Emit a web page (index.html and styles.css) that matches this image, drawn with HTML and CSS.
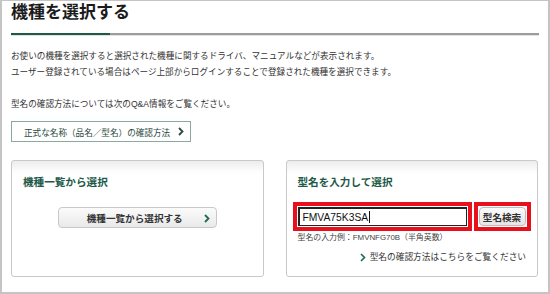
FILE: index.html
```html
<!DOCTYPE html>
<html lang="ja">
<head>
    <meta charset="UTF-8" />
    <title>機種を選択する</title>
    <link rel="stylesheet" href="styles.css">
</head>
<body>
    <div class="frame">
        <h1>機種を選択する</h1>
        <div class="rule"></div>

        <p class="lead">お使いの機種を選択すると選択された機種に関するドライバ、マニュアルなどが表示されます。<br>ユーザー登録されている場合はページ上部からログインすることで登録された機種を選択できます。</p>
        <p class="note">型名の確認方法については次のQ&amp;A情報をご覧ください。</p>

        <a class="howto" href="#">正式な名称（品名／型名）の確認方法
            <svg class="chev" width="6" height="9" viewBox="0 0 6 9"><polyline points="1,1 4.5,4.5 1,8" fill="none" stroke="#2c4a40" stroke-width="1.8"/></svg>
        </a>

        <div class="cards">
            <div class="card">
                <h2>機種一覧から選択</h2>
                <div class="list-btn-wrap">
                    <a class="list-btn" href="#">機種一覧から選択する
                        <svg class="chev-abs" width="6" height="9" viewBox="0 0 6 9"><polyline points="1,1 4.5,4.5 1,8" fill="none" stroke="#1d6a52" stroke-width="1.8"/></svg>
                    </a>
                </div>
            </div>
            <div class="card">
                <h2>型名を入力して選択</h2>
                <div class="search-row">
                    <div class="hl">
                        <div class="input-box"><span class="typed">FMVA75K3SA</span><span class="caret"></span></div>
                    </div>
                    <div class="hl">
                        <button class="search-btn">型名検索</button>
                    </div>
                </div>
                <div class="hint">型名の入力例：FMVNFG70B（半角英数）</div>
                <a class="more" href="#">
                    <svg width="6" height="9" viewBox="0 0 6 9"><polyline points="1,1 4.5,4.5 1,8" fill="none" stroke="#1d6a52" stroke-width="1.6"/></svg>
                    型名の確認方法はこちらをご覧ください
                </a>
            </div>
        </div>
    </div>
</body>
</html>
```

FILE: styles.css
```css
body {
    margin: 0;
    padding: 0;
    background: #fff;
    color: #333;
    font-family: "Liberation Sans", "Noto Sans CJK JP", sans-serif;
}
.frame {
    width: 550px;
    height: 294px;
    box-sizing: border-box;
    border: 2px solid #c4c4c4;
    border-top-width: 1px;
    padding: 0 9px 0 9px;
    overflow: hidden;
}
h1 {
    margin: 0;
    padding-top: 1px;
    font-size: 17px;
    line-height: 22px;
    height: 22px;
    color: #1b1b1b;
    font-weight: bold;
    padding-bottom: 9px;
}
.rule {
    height: 2px;
    width: 528px;
    background: linear-gradient(to right, #1d5a48 99px, #9c9c9c 99px);
    border-bottom: 1px solid #e2e2e2;
}
.lead,
.note {
    margin: 0;
    font-size: 8.6px;
    line-height: 16px;
    color: #333;
}
.lead {
    margin-top: 12px;
}
.note {
    margin-top: 16px;
}
.howto {
    margin-top: 9px;
    display: flex;
    align-items: center;
    width: 180px;
    height: 21px;
    box-sizing: border-box;
    border: 1px solid #8aaa9f;
    padding-left: 12px;
    font-size: 8.6px;
    color: #2c4a40;
    text-decoration: none;
}
.chev {
    margin-left: 8px;
}
.cards {
    margin-top: 18px;
    display: flex;
    gap: 22px;
    width: 527px;
}
.card {
    flex: 1 1 0;
    min-width: 0;
    height: 117px;
    box-sizing: border-box;
    border: 1px solid #c9c9c9;
    border-radius: 3px;
    background: linear-gradient(to bottom, #ececec 0, #fcfcfc 10px, #fff 14px);
    padding: 14px 11px 0 11px;
    display: flex;
    flex-direction: column;
}
.card h2 {
    margin: 0;
    font-size: 10.6px;
    line-height: 14px;
    color: #1d5a48;
    font-weight: bold;
}
.list-btn-wrap {
    margin-top: 18px;
    display: flex;
    justify-content: center;
}
.list-btn {
    position: relative;
    width: 159px;
    height: 21px;
    box-sizing: border-box;
    border: 1px solid #c8c8c8;
    border-radius: 4px;
    background: linear-gradient(to bottom, #fbfbfb, #e9e9e9);
    font-size: 9.6px;
    font-weight: bold;
    color: #333;
    text-decoration: none;
    display: flex;
    align-items: center;
    padding-left: 28px;
}
.chev-abs {
    position: absolute;
    right: 6px;
    top: 6px;
}
.search-row {
    margin-top: 13px;
    margin-left: -5px;
    display: flex;
    gap: 2px;
}
.hl {
    border: 4px solid #e8101c;
    padding: 1px;
    display: flex;
}
.input-box {
    width: 169px;
    height: 19px;
    box-sizing: border-box;
    border: 1px solid #222;
    border-top-width: 2px;
    border-left-width: 2px;
    display: flex;
    align-items: center;
    padding-left: 3px;
    font-family: "Liberation Sans", sans-serif;
    font-size: 10.3px;
    color: #111;
}
.caret {
    width: 1px;
    height: 12px;
    background: #111;
    margin-left: 1px;
}
.search-btn {
    width: 47px;
    height: 19px;
    box-sizing: border-box;
    border: 1px solid #bdbdbd;
    border-radius: 4px;
    background: linear-gradient(to bottom, #fbfbfb, #e6e6e6);
    font-family: "Liberation Sans", "Noto Sans CJK JP", sans-serif;
    font-size: 9.6px;
    font-weight: bold;
    color: #333;
    padding: 0;
}
.hint {
    margin-top: 2px;
    font-size: 7.9px;
    line-height: 10px;
    color: #444;
}
.more {
    margin-top: 8px;
    align-self: flex-end;
    display: flex;
    align-items: center;
    gap: 4px;
    font-size: 8.7px;
    line-height: 12px;
    color: #333;
    text-decoration: none;
}
```
